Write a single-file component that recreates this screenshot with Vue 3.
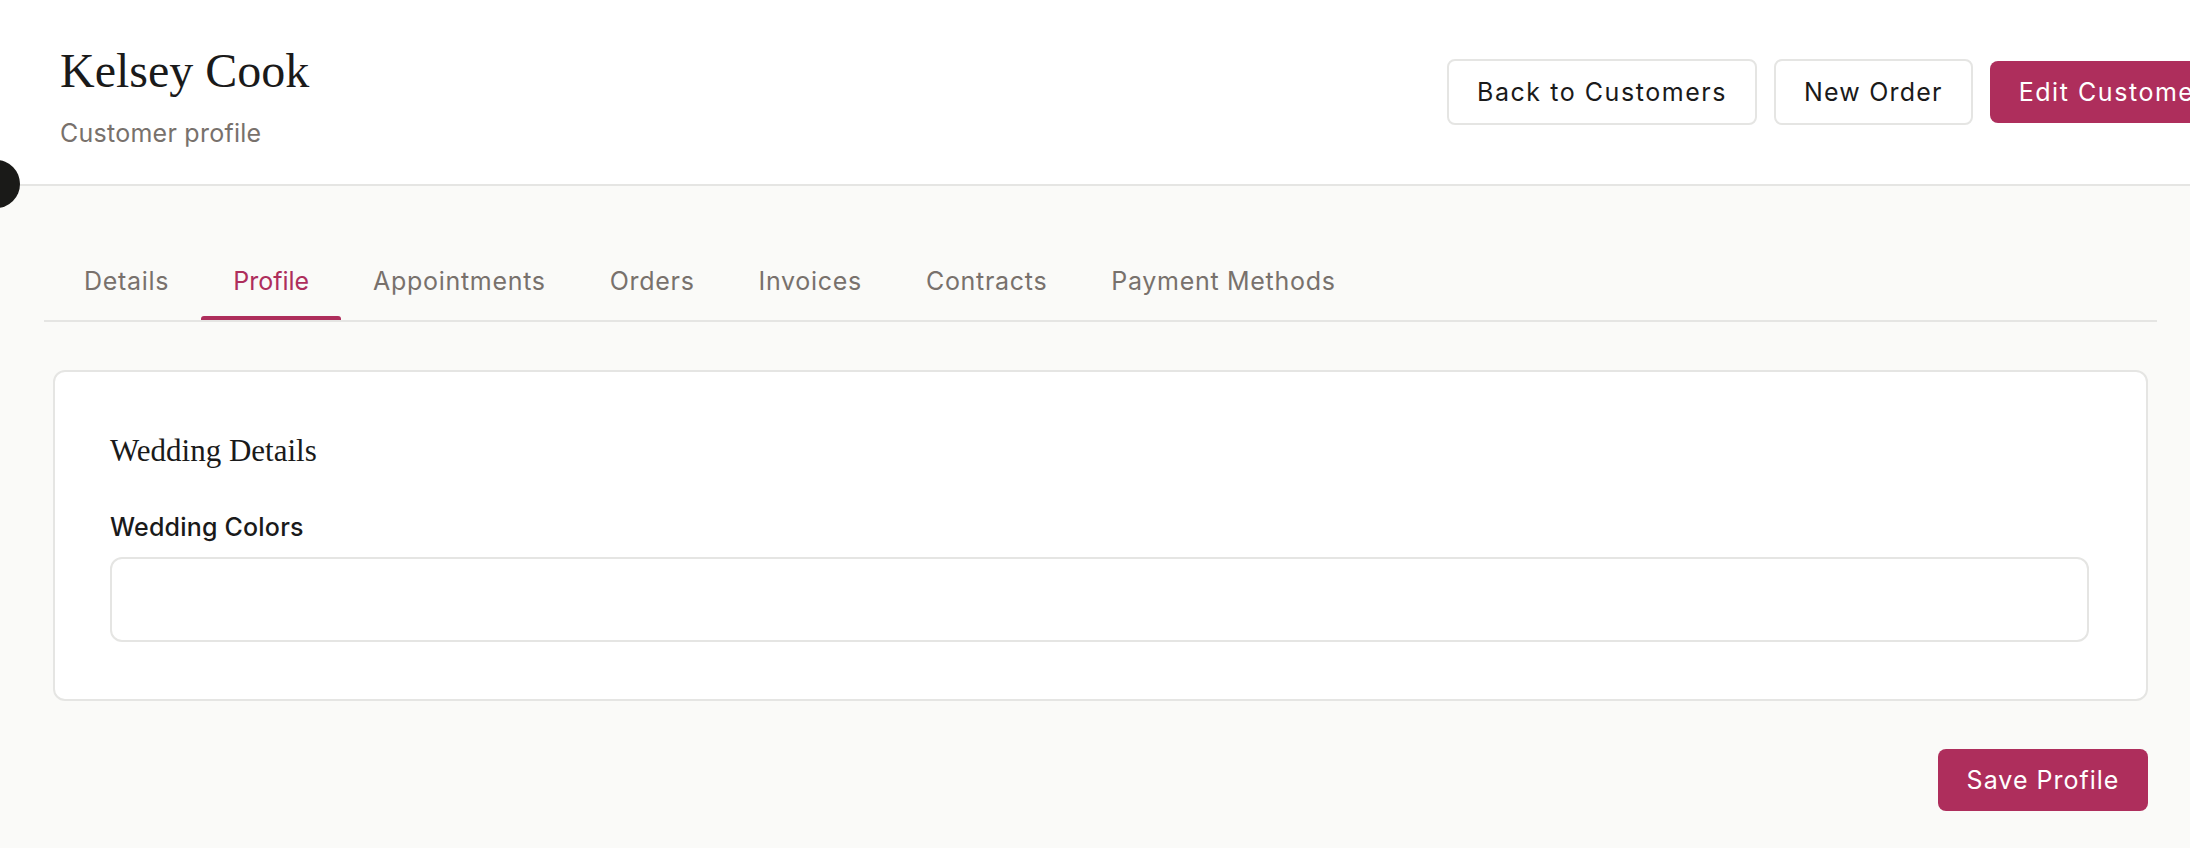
<template>
  <div class="page">
    <!-- dark blob poking in from the left edge (sidebar toggle) -->
    <span class="side-toggle"></span>

    <header class="page-header">
      <div class="title-block">
        <h1 class="page-title">Kelsey Cook</h1>
        <p class="page-sub">Customer profile</p>
      </div>
      <div class="actions">
        <button class="btn btn-outline">Back to Customers</button>
        <button class="btn btn-outline btn-tight">New Order</button>
        <button class="btn btn-primary">Edit Customer</button>
      </div>
    </header>

    <main class="content">
      <nav class="tabs">
        <a
          v-for="tab in tabs"
          :key="tab"
          class="tab"
          :class="{ 'tab--active': tab === activeTab }"
        >{{ tab }}</a>
      </nav>

      <section class="card">
        <h2 class="card-title">Wedding Details</h2>
        <label class="field-label" for="colors">Wedding Colors</label>
        <input id="colors" class="field-input" type="text" />
      </section>

      <div class="footer-row">
        <button class="btn btn-primary btn-save">Save Profile</button>
      </div>
    </main>
  </div>
</template>

<script setup>
const tabs = ['Details', 'Profile', 'Appointments', 'Orders', 'Invoices', 'Contracts', 'Payment Methods']
const activeTab = 'Profile'
</script>

<style>
html, body {
  margin: 0;
  background: #fafaf8;
  overflow: hidden;
}
</style>

<style scoped>
.page {
  position: relative;
  width: 2190px;
  height: 848px;
  overflow: hidden;
  background: #fafaf8;
  font-family: Inter, "Liberation Sans", sans-serif;
  color: #1a1a1a;
}

.side-toggle {
  position: absolute;
  left: -28px;
  top: 160px;
  width: 48px;
  height: 48px;
  border-radius: 50%;
  background: #1a1a18;
  z-index: 2;
}

/* ── Header ─────────────────────────────────────────── */
.page-header {
  display: grid;
  grid-template-columns: 1387px max-content;
  height: 184px;
  padding-left: 60px;
  background: #fff;
  border-bottom: 2px solid #e5e5e3;
}
.page-title {
  margin: 44px 0 0;
  font-family: "Liberation Serif", serif;
  font-size: 48px;
  font-weight: 400;
  line-height: 54px;
}
.page-sub {
  margin: 19px 0 0;
  font-size: 25px;
  letter-spacing: 0.25px;
  line-height: 32px;
  color: #78716c;
}
.actions {
  display: flex;
  align-items: center;
  gap: 17px;
  height: 184px;
}

.btn {
  font-family: inherit;
  font-size: 25px;
  line-height: 32px;
  letter-spacing: 1.55px;
  border-radius: 8px;
  white-space: nowrap;
}
.btn-outline {
  height: 66px;
  padding: 0 28px;
  background: #fff;
  border: 2px solid #e5e5e3;
  color: #1a1a1a;
}
.btn-tight {
  letter-spacing: 1.2px;
}
.btn-primary {
  height: 62px;
  padding: 0 29px;
  background: #ae2e5c;
  border: 0;
  color: #fff;
}

/* ── Tabs ───────────────────────────────────────────── */
.tabs {
  display: flex;
  height: 136px;
  margin: 0 33px 0 44px;
  padding-left: 8px;
  box-sizing: border-box;
  border-bottom: 2px solid #e5e5e3;
}
.tab {
  position: relative;
  align-self: flex-end;
  padding: 0 32px 23px;
  font-size: 25px;
  letter-spacing: 0.7px;
  line-height: 32px;
  color: #78716c;
}
.tab--active {
  color: #ae2e5c;
  letter-spacing: 0;
}
.tab--active::after {
  content: "";
  position: absolute;
  left: 0;
  right: 0;
  bottom: 0;
  height: 4px;
  border-radius: 3px 3px 0 0;
  background: #ae2e5c;
}

/* ── Card ───────────────────────────────────────────── */
.card {
  margin: 48px 42px 0 53px;
  padding: 61px 57px 56px 55px;
  height: 331px;
  box-sizing: border-box;
  display: flex;
  flex-direction: column;
  background: #fff;
  border: 2px solid #e5e5e3;
  border-radius: 12px;
}
.card-title {
  margin: 0;
  font-family: "Liberation Serif", serif;
  font-size: 31px;
  font-weight: 400;
  line-height: 36px;
}
.field-label {
  margin-top: 42px;
  font-size: 25px;
  font-weight: 500;
  letter-spacing: 0.2px;
  line-height: 32px;
}
.field-input {
  margin-top: 14px;
  height: 85px;
  box-sizing: border-box;
  background: #fff;
  border: 2px solid #e5e5e3;
  border-radius: 12px;
  outline: none;
}

.footer-row {
  display: flex;
  justify-content: flex-end;
  margin: 48px 42px 0 0;
}
.btn-save {
  width: 210px;
  padding: 0;
  letter-spacing: 1px;
}
</style>
